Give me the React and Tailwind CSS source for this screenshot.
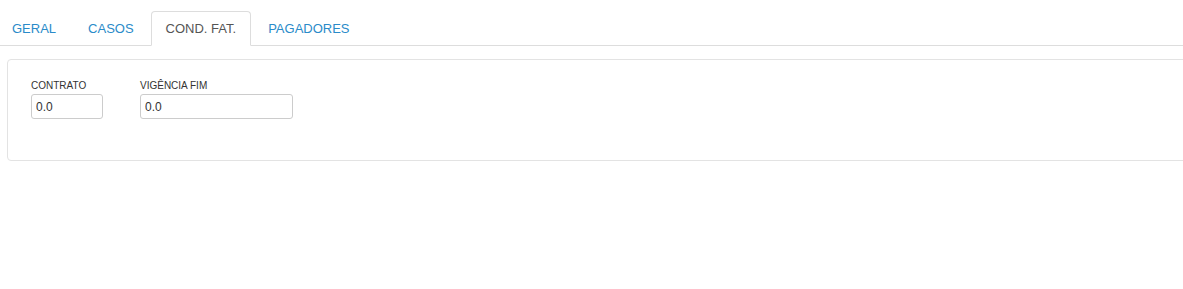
export default function App() {
  const tabs = ['GERAL', 'CASOS', 'COND. FAT.', 'PAGADORES'];
  const active = 'COND. FAT.';

  return (
    <div
      className="w-[1183px] h-[289px] bg-white overflow-hidden"
      style={{ fontFamily: '"Liberation Sans", Arial, sans-serif' }}
    >
      <div className="pt-[11px] border-b border-[#ddd]">
        <ul className="flex gap-[2px] ml-[-3px] mb-[-1px]">
          {tabs.map((tab) => (
            <li
              key={tab}
              className={
                tab === active
                  ? 'px-[14px] py-[8px] text-[13px] leading-[17px] border border-[#ddd] border-b-white rounded-t-[4px] bg-white text-[#555]'
                  : 'px-[14px] py-[8px] text-[13px] leading-[17px] border border-transparent text-[#2a8bc9]'
              }
            >
              {tab}
            </li>
          ))}
        </ul>
      </div>

      <div className="mt-[13px] ml-[7px] w-[1200px] h-[102px] border border-[#e3e3e3] rounded-[4px] pt-[19px] pl-[23px]">
        <div className="flex gap-[37px]">
          <div className="flex flex-col">
            <label className="text-[10px] leading-[14px] text-[#333] mb-[1px]">CONTRATO</label>
            <input
              readOnly
              value="0.0"
              className="w-[72px] h-[25px] border border-[#ccc] rounded-[3px] px-[4px] text-[12px] text-[#333] outline-none"
            />
          </div>
          <div className="flex flex-col">
            <label className="text-[10px] leading-[14px] text-[#333] mb-[1px]">VIGÊNCIA FIM</label>
            <input
              readOnly
              value="0.0"
              className="w-[153px] h-[25px] border border-[#ccc] rounded-[3px] px-[4px] text-[12px] text-[#333] outline-none"
            />
          </div>
        </div>
      </div>
    </div>
  );
}
